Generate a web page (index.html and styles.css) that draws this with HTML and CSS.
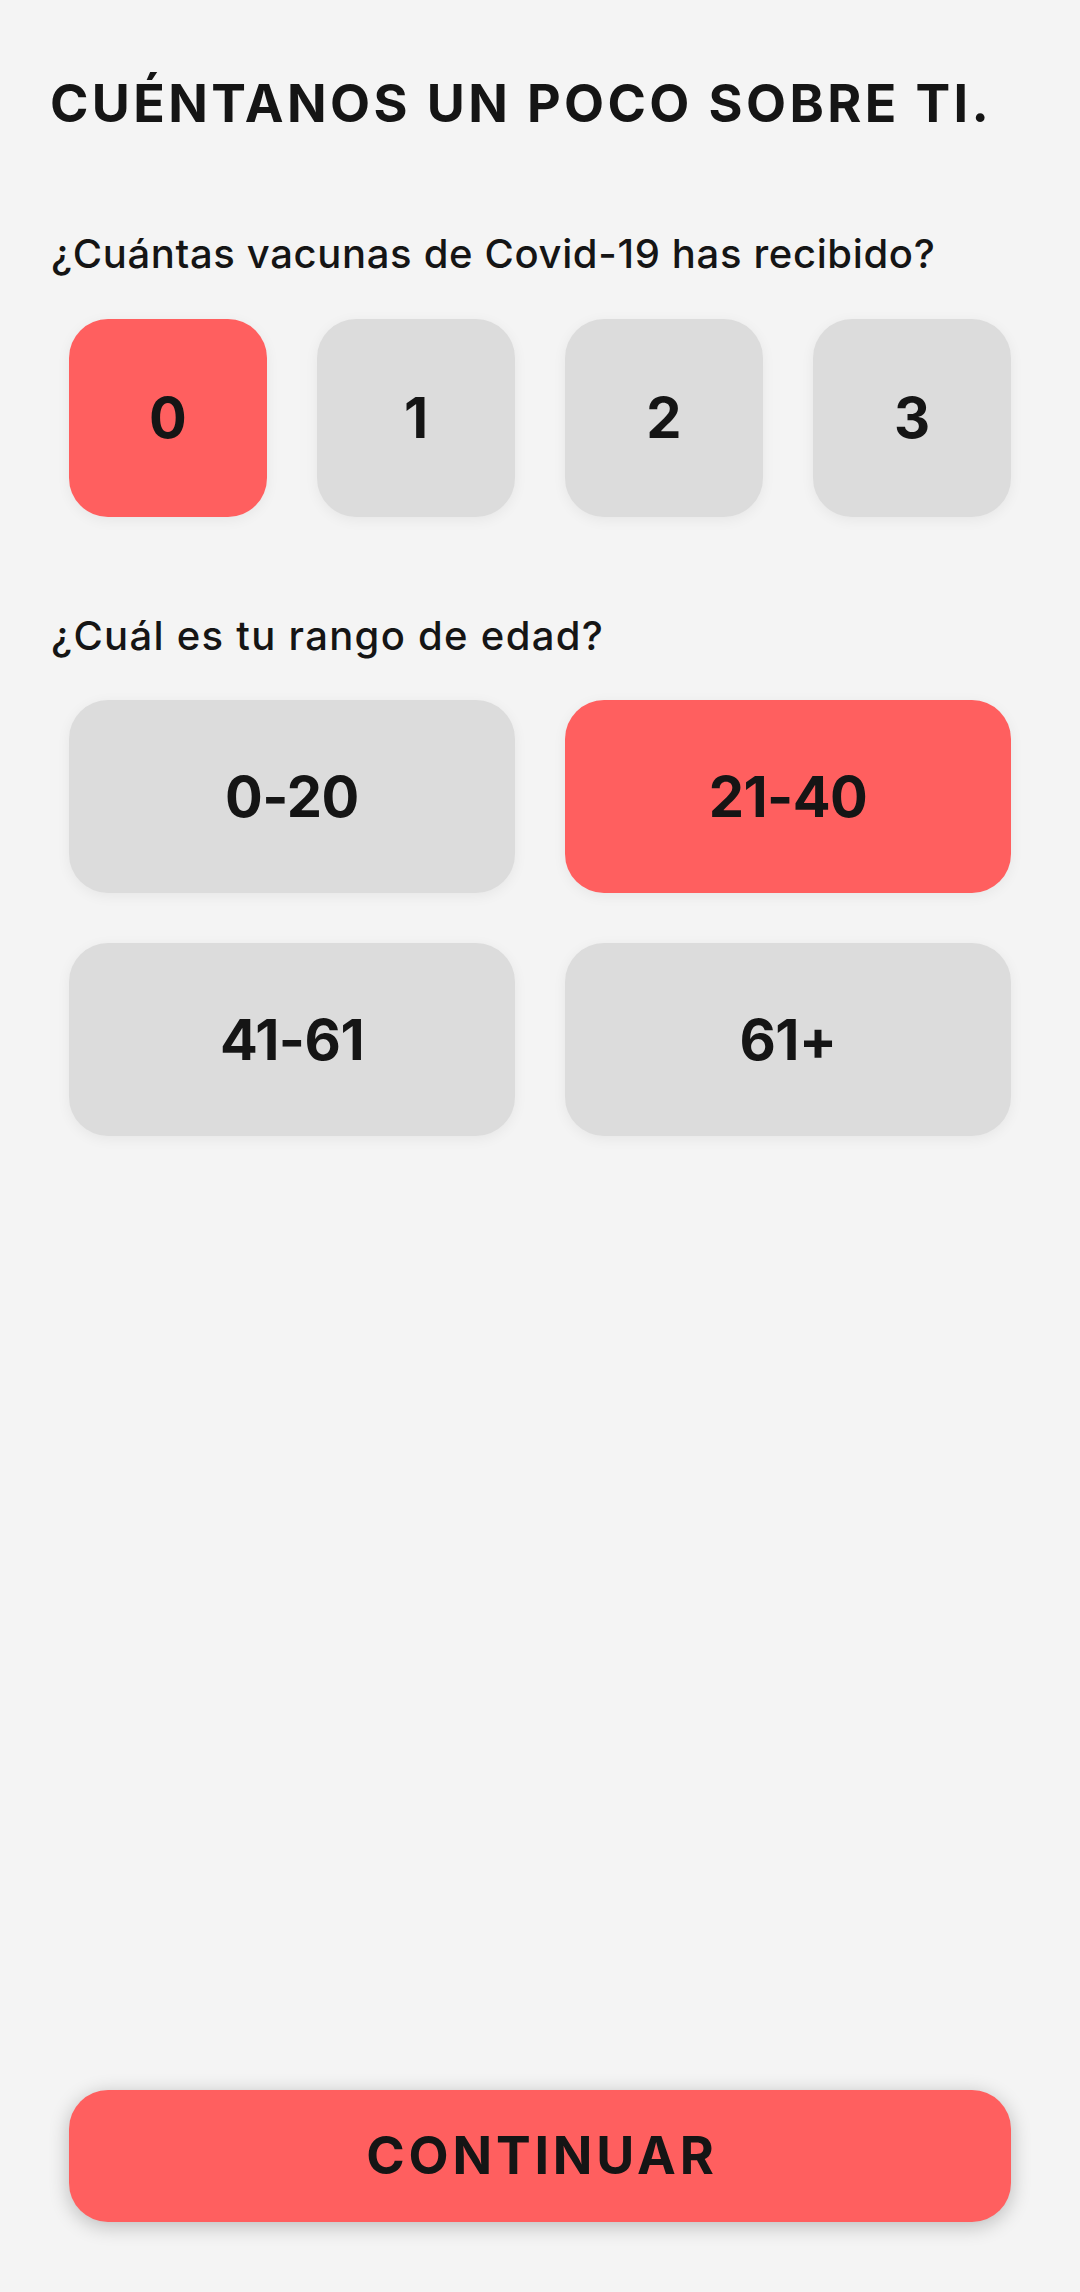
FILE: index.html
```html
<!DOCTYPE html>
<html lang="es">
<head>
<meta charset="utf-8">
<title>Cuéntanos un poco sobre ti</title>
<link rel="stylesheet" href="styles.css">
</head>
<body>
<div class="screen">
  <main class="content">
    <h1 class="title">CUÉNTANOS UN POCO SOBRE TI.</h1>

    <p class="question q-first">¿Cuántas vacunas de Covid-19 has recibido?</p>
    <div class="grid grid-4">
      <button class="opt opt-square selected">0</button>
      <button class="opt opt-square">1</button>
      <button class="opt opt-square">2</button>
      <button class="opt opt-square">3</button>
    </div>

    <p class="question q-second">¿Cuál es tu rango de edad?</p>
    <div class="grid grid-2">
      <button class="opt opt-wide">0-20</button>
      <button class="opt opt-wide selected">21-40</button>
      <button class="opt opt-wide">41-61</button>
      <button class="opt opt-wide">61+</button>
    </div>
  </main>

  <footer class="footer">
    <button class="continue">CONTINUAR</button>
  </footer>
</div>
</body>
</html>
```

FILE: styles.css
```css
* { box-sizing: border-box; }

html, body {
  margin: 0;
  padding: 0;
  background: #f4f4f4;
}

body {
  font-family: Inter, "Noto Sans", "Liberation Sans", sans-serif;
  color: #151515;
}

.screen {
  min-height: 2292px;
  display: flex;
  flex-direction: column;
}

.content {
  flex: 1;
  display: flex;
  flex-direction: column;
}

.title {
  margin: 72px 0 0 50px;
  font-size: 52px;
  line-height: 64px;
  font-weight: 700;
  letter-spacing: 3.4px;
}

.question {
  margin: 0 0 0 51px;
  font-size: 40px;
  line-height: 48px;
  font-weight: 500;
}

.q-first { margin-top: 94px; letter-spacing: 0.65px; }
.q-second { margin-top: 95px; letter-spacing: 1.3px; }

.grid {
  display: grid;
  gap: 50px;
  padding: 0 69px;
  margin-top: 41px;
}

.grid-4 { grid-template-columns: repeat(4, 1fr); }
.grid-2 { grid-template-columns: repeat(2, 1fr); margin-top: 40px; }

.opt {
  border: none;
  margin: 0;
  padding: 0;
  font-family: inherit;
  color: #151515;
  font-weight: 700;
  font-size: 56px;
  line-height: 1;
  background: #dcdcdc;
  border-radius: 39px;
  box-shadow: 0 3px 14px rgba(0, 0, 0, 0.06);
  display: flex;
  align-items: center;
  justify-content: center;
}

.opt-square { height: 198px; }
.opt-wide { height: 193px; letter-spacing: -0.5px; }

.opt.selected { background: #ff5f5f; }

.footer {
  padding: 0 69px 70px;
}

.continue {
  width: 100%;
  height: 132px;
  border: none;
  margin: 0;
  padding: 0 0 0 4px;
  border-radius: 39px;
  background: #ff5f5f;
  color: #151515;
  font-family: inherit;
  font-weight: 700;
  font-size: 52px;
  line-height: 1;
  letter-spacing: 3.8px;
  box-shadow: 0 4px 20px rgba(0, 0, 0, 0.24);
  display: flex;
  align-items: center;
  justify-content: center;
}
```
